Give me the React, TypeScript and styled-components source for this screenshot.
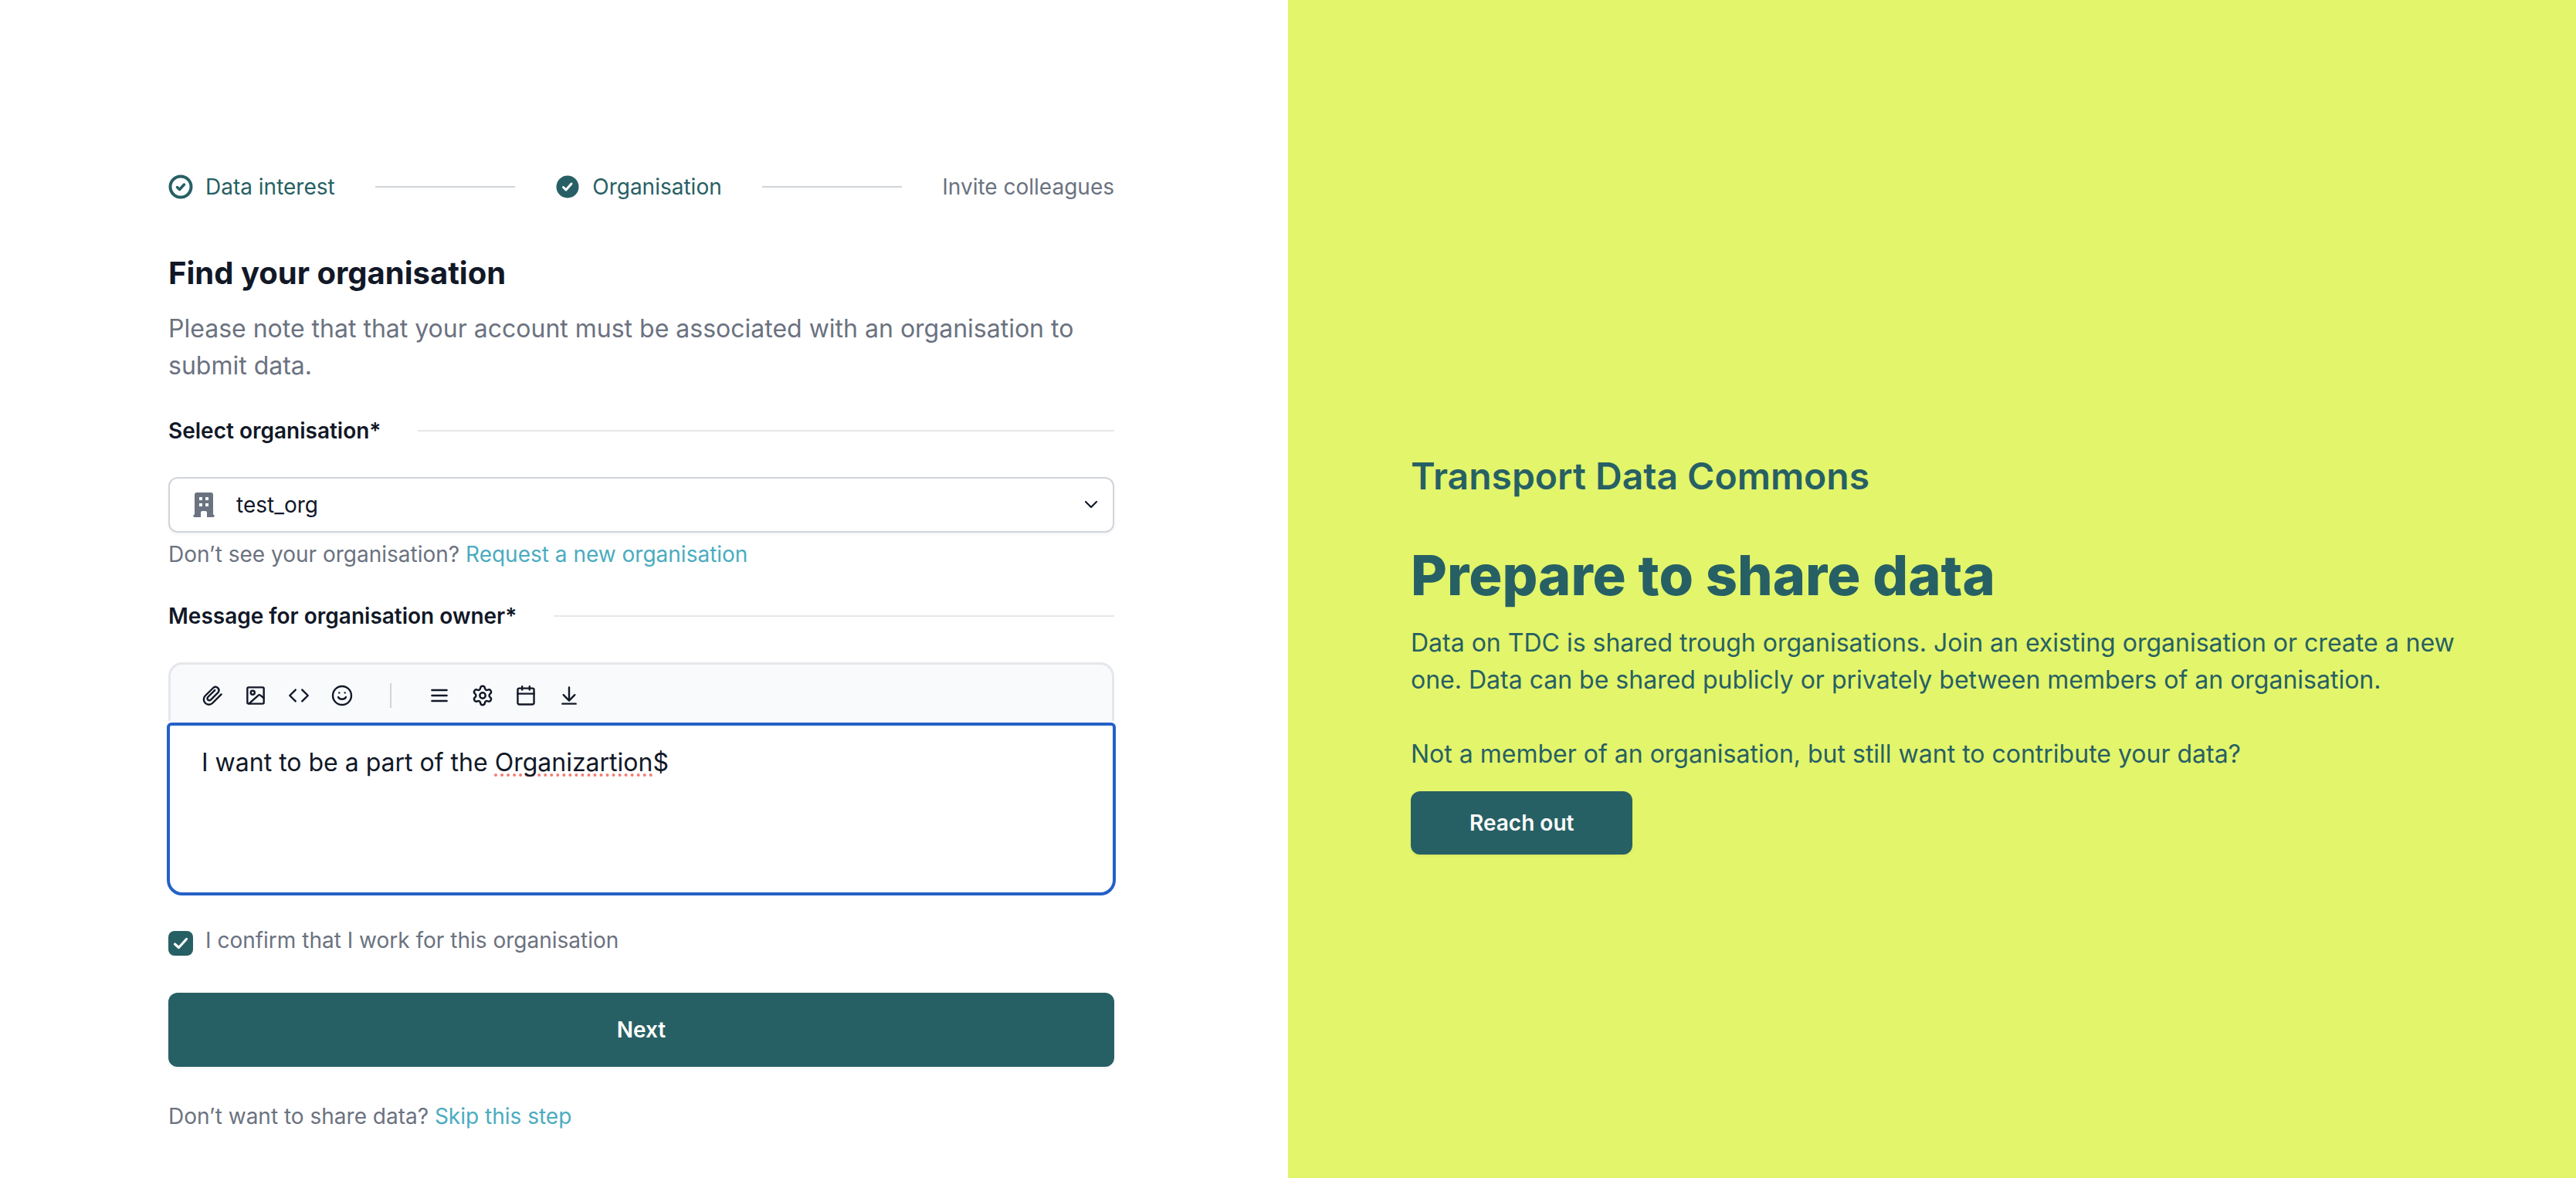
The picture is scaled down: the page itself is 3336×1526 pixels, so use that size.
import React from "react";
import styled, { createGlobalStyle } from "styled-components";

const teal = "#276064";
const ink = "#111827";
const grey = "#6b7280";
const link = "#4aacbf";
const blue = "#2461c8";

const GlobalStyle = createGlobalStyle`
  *, *::before, *::after { box-sizing: border-box; }
  body { margin: 0; background: #fff; color: ${ink}; font-family: Inter, "Liberation Sans", sans-serif; font-size: 28px; line-height: 40px; }
  h1, h2, p { margin: 0; }
  button, select, textarea { font: inherit; color: inherit; }
`;

const Page = styled.div`
  display: grid;
  grid-template-columns: 1fr 1fr;
  min-height: 100vh;
`;

const FormSide = styled.main`
  padding: 222px 225px 48px 218px;
`;

const Steps = styled.ol`
  display: flex;
  align-items: center;
  gap: 52px;
  margin: 0 0 56px;
  padding: 0;
  list-style: none;
`;

const Step = styled.li<{ $active?: boolean }>`
  display: flex;
  align-items: center;
  gap: 16px;
  color: ${(p) => (p.$active ? teal : grey)};
`;

const StepLine = styled.li`
  flex: 1;
  height: 2px;
  background: #d1d5db;
`;

const Title = styled.h1`
  font-size: 40px;
  line-height: 72px;
  font-weight: 700;
`;

const Intro = styled.p`
  margin-top: 12px;
  font-size: 32px;
  line-height: 48px;
  color: ${grey};
`;

const FieldHead = styled.div`
  display: flex;
  align-items: center;
  gap: 48px;
  margin: 40px 0;
  &::after { content: ""; flex: 1; height: 2px; background: #e5e7eb; }
`;

const FieldLabel = styled.label`
  font-weight: 600;
`;

const SelectBox = styled.div`
  display: grid;
  align-items: center;
  & > * { grid-area: 1 / 1; }
  & > svg { pointer-events: none; margin: 0 20px 0 30px; }
  & > svg:last-child { justify-self: end; }
`;

const Select = styled.select`
  appearance: none;
  width: 100%;
  height: 72px;
  padding: 0 80px 0 86px;
  border: 2px solid #d1d5db;
  border-radius: 12px;
  background: #fff;
  box-shadow: 0 2px 4px rgba(0, 0, 0, 0.05);
`;

const Note = styled.p<{ $top: number }>`
  margin-top: ${(p) => p.$top}px;
  color: ${grey};
`;

const Link = styled.a`
  color: ${link};
  text-decoration: none;
`;

const Toolbar = styled.div`
  display: flex;
  align-items: center;
  gap: 24px;
  height: 76px;
  padding: 6px 38px 0;
  border: 3px solid #e5e7eb;
  border-bottom: 0;
  border-radius: 18px 18px 0 0;
  background: #f9fafb;
`;

const Tool = styled.button`
  display: flex;
  padding: 0;
  border: 0;
  background: none;
  cursor: pointer;
`;

const Divider = styled.span`
  width: 2px;
  height: 32px;
  margin: 0 22px;
  background: #d1d5db;
`;

const Editor = styled.div`
  display: grid;
  height: 220px;
  margin-top: 4px;
  outline: 4px solid ${blue};
  outline-offset: -2px;
  border-radius: 4px 4px 18px 18px;
  & > * {
    grid-area: 1 / 1;
    padding: 26px 43px;
    font-size: 32px;
    line-height: 48px;
    white-space: pre-wrap;
  }
`;

const Textarea = styled.textarea`
  border: 0;
  outline: 0;
  resize: none;
  background: none;
`;

const SpellLayer = styled.div`
  color: transparent;
  pointer-events: none;
  & > span {
    text-decoration: underline dotted #f47c72 4px;
    text-underline-offset: 3px;
    text-decoration-skip-ink: none;
  }
`;

const Confirm = styled.div`
  display: flex;
  align-items: flex-start;
  gap: 16px;
  margin-top: 40px;
  color: ${grey};
`;

const CheckWrap = styled.span`
  display: grid;
  margin-top: 8px;
  & > * { grid-area: 1 / 1; }
  & > svg { pointer-events: none; }
`;

const Checkbox = styled.input`
  appearance: none;
  width: 32px;
  height: 32px;
  margin: 0;
  border-radius: 8px;
  background: ${teal};
`;

const Button = styled.button<{ $wide?: boolean }>`
  display: block;
  width: ${(p) => (p.$wide ? "100%" : "auto")};
  padding: ${(p) => (p.$wide ? "28px 40px" : "21px 76px")};
  border: 0;
  border-radius: 12px;
  background: ${teal};
  color: #fff;
  font-weight: 600;
  box-shadow: 0 2px 4px rgba(0, 0, 0, 0.05);
  cursor: pointer;
`;

const NextRow = styled.div`
  margin-top: 48px;
`;

const PromoSide = styled.aside`
  display: flex;
  flex-direction: column;
  align-items: flex-start;
  justify-content: center;
  padding: 166px 128px 0 159px;
  background: #e3f56b;
  color: ${teal};
`;

const Brand = styled.p`
  font-size: 48px;
  line-height: 64px;
  font-weight: 600;
`;

const PromoTitle = styled.h2`
  margin-top: 48px;
  font-size: 72px;
  line-height: 96px;
  font-weight: 800;
`;

const PromoText = styled.p<{ $top: number }>`
  margin-top: ${(p) => p.$top}px;
  font-size: 32px;
  line-height: 48px;
`;

const ReachRow = styled.div`
  margin-top: 24px;
`;

const Icon = ({ children }: { children: React.ReactNode }) => (
  <svg width="32" height="32" viewBox="0 0 24 24" fill="none" stroke="currentColor" strokeWidth="1.8" strokeLinecap="round" strokeLinejoin="round" aria-hidden="true">
    {children}
  </svg>
);

const leftTools = [
  { name: "Attach file", art: <path d="M20.700 10.800l-8.500 8.500a5 5 0 0 1-7.100-7.100L13.100 4.300a3.300 3.300 0 0 1 4.600 4.600L10.400 16.200a1.900 1.900 0 0 1-2.700-2.700L14.400 6.800" /> },
  { name: "Insert image", art: <><rect x="4" y="4" width="16" height="16" rx="1.200" /><circle cx="9.200" cy="9.200" r="1.900" /><path d="M5.700 19.800L14.800 11.700q.9-.7 1.800 0L20 14.500" /></> },
  { name: "Insert code", art: <path d="M8.800 6.400L3.200 12l5.600 5.600M15.200 6.400l5.600 5.600-5.600 5.600" /> },
  { name: "Insert emoji", art: <><circle cx="12" cy="12" r="9" /><path d="M8.300 13.600c1.500 2.600 5.900 2.600 7.400 0M9.200 9.300v.01M14.800 9.300v.01" /></> },
];

const rightTools = [
  { name: "List", art: <path d="M4.800 6.700h14.400M4.800 12h14.400M4.800 17.300h14.400" /> },
  { name: "Settings", art: <g transform="translate(12 12) scale(.92) translate(-12 -12)" strokeWidth="2"><path d="M9.671 4.136a2.340 2.340 0 0 1 4.659 0 2.340 2.340 0 0 0 3.319 1.915 2.340 2.340 0 0 1 2.330 4.033 2.340 2.340 0 0 0 0 3.831 2.340 2.340 0 0 1-2.330 4.033 2.340 2.340 0 0 0-3.319 1.915 2.340 2.340 0 0 1-4.659 0 2.340 2.340 0 0 0-3.320-1.915 2.340 2.340 0 0 1-2.330-4.033 2.340 2.340 0 0 0 0-3.831A2.340 2.340 0 0 1 6.350 6.051a2.340 2.340 0 0 0 3.319-1.915" /><circle cx="12" cy="12" r="3" /></g> },
  { name: "Calendar", art: <><rect x="4.100" y="5" width="15.800" height="15.600" rx="1.400" /><path d="M4.100 10.200h15.800M8.400 3.200v3.200M15.600 3.200v3.200" /></> },
  { name: "Download", art: <path d="M12 4v12.500M6.500 11.400l5.500 5.500 5.500-5.500M5.500 20h13" /> },
];

export default function App() {
  return (
    <>
      <GlobalStyle />
      <Page>
        <FormSide>
          <Steps>
            <Step $active>
              <svg width="32" height="32" viewBox="0 0 32 32" fill="none" stroke={teal} strokeLinecap="round" strokeLinejoin="round" aria-hidden="true">
                <circle cx="16" cy="16" r="13.5" strokeWidth="4" />
                <path d="M11.500 16.500l3 3 6-6.500" strokeWidth="3.500" />
              </svg>
              Data interest
            </Step>
            <StepLine aria-hidden="true" />
            <Step $active aria-current="step">
              <svg width="32" height="32" viewBox="0 0 32 32" fill="none" strokeLinecap="round" strokeLinejoin="round" aria-hidden="true">
                <circle cx="16" cy="16" r="14.500" fill={teal} />
                <path d="M10.500 16.500l3.500 3.500 7-8" stroke="#fff" strokeWidth="3" />
              </svg>
              Organisation
            </Step>
            <StepLine aria-hidden="true" />
            <Step>Invite colleagues</Step>
          </Steps>

          <Title>Find your organisation</Title>
          <Intro>Please note that that your account must be associated with an organisation to submit data.</Intro>

          <FieldHead>
            <FieldLabel htmlFor="organisation">Select organisation*</FieldLabel>
          </FieldHead>
          <SelectBox>
            <Select id="organisation" defaultValue="test_org">
              <option value="test_org">test_org</option>
            </Select>
            <svg width="32" height="32" viewBox="0 0 32 32" fill={grey} fillRule="evenodd" aria-hidden="true">
              <path d="M7 0h18a3 3 0 0 1 3 3v25.500a1.700 1.700 0 0 1 0 3.500h-8v-6a2 2 0 0 0-2-2h-4a2 2 0 0 0-2 2v6H4a1.700 1.700 0 0 1 0-3.500V3a3 3 0 0 1 3-3zM10 6v4h4V6zM18 6v4h4V6zM10 14v4h4v-4zM18 14v4h4v-4z" />
            </svg>
            <svg width="20" height="12" viewBox="0 0 20 12" fill="none" stroke={ink} strokeWidth="2.200" strokeLinecap="round" strokeLinejoin="round" aria-hidden="true">
              <path d="M3 2l7 7 7-7" />
            </svg>
          </SelectBox>
          <Note $top={8}>
            Don’t see your organisation? <Link href="#request">Request a new organisation</Link>
          </Note>

          <FieldHead>
            <FieldLabel htmlFor="message">Message for organisation owner*</FieldLabel>
          </FieldHead>
          <Toolbar role="toolbar" aria-label="Message tools">
            {leftTools.map((t) => (
              <Tool key={t.name} type="button" aria-label={t.name}><Icon>{t.art}</Icon></Tool>
            ))}
            <Divider />
            {rightTools.map((t) => (
              <Tool key={t.name} type="button" aria-label={t.name}><Icon>{t.art}</Icon></Tool>
            ))}
          </Toolbar>
          <Editor>
            <SpellLayer aria-hidden="true">I want to be a part of the <span>Organizartion</span></SpellLayer>
            <Textarea id="message" spellCheck={false} defaultValue="I want to be a part of the Organizartion$" />
          </Editor>

          <Confirm>
            <CheckWrap>
              <Checkbox id="confirm" type="checkbox" defaultChecked />
              <svg width="32" height="32" viewBox="0 0 32 32" fill="none" stroke="#fff" strokeWidth="3.200" strokeLinecap="round" strokeLinejoin="round" aria-hidden="true">
                <path d="M8.500 17l5 4.500 10-11" />
              </svg>
            </CheckWrap>
            <label htmlFor="confirm">I confirm that I work for this organisation</label>
          </Confirm>
          <NextRow>
            <Button $wide type="button">Next</Button>
          </NextRow>
          <Note $top={44}>
            Don’t want to share data? <Link href="#skip">Skip this step</Link>
          </Note>
        </FormSide>

        <PromoSide>
          <Brand>Transport Data Commons</Brand>
          <PromoTitle>Prepare to share data</PromoTitle>
          <PromoText $top={16}>
            Data on TDC is shared trough organisations. Join an existing organisation or create a new one. Data can be shared publicly or privately between members of an organisation.
          </PromoText>
          <PromoText $top={48}>Not a member of an organisation, but still want to contribute your data?</PromoText>
          <ReachRow>
            <Button type="button">Reach out</Button>
          </ReachRow>
        </PromoSide>
      </Page>
    </>
  );
}
